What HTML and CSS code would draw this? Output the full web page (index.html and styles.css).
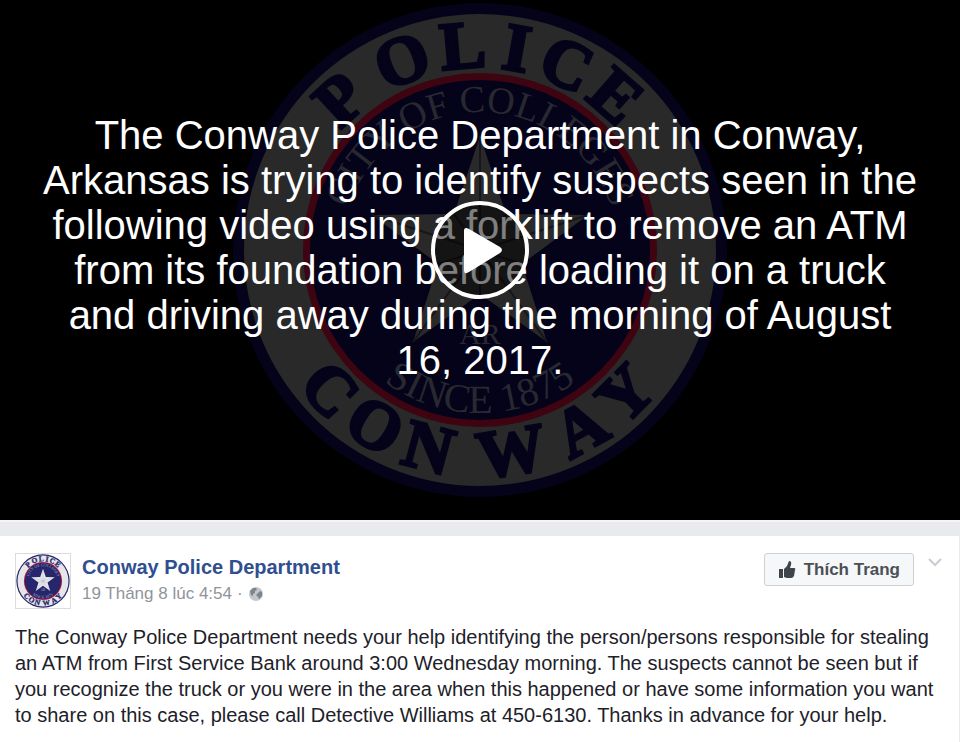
FILE: index.html
```html
<!DOCTYPE html>
<html lang="vi">
<head>
    <meta charset="UTF-8">
    <meta name="viewport" content="width=device-width, initial-scale=1.0">
    <title>Conway Police Department</title>
    <link rel="stylesheet" href="styles.css">
</head>
<body>
    <!-- Video -->
    <div class="video">
        <svg class="seal" viewBox="-250 -250 500 500" aria-hidden="true">
            <defs>
                <path id="arcTop" d="M-138 0A138 138 0 0 1 138 0"/>
                <path id="arcBottom" d="M-163 0A163 163 0 0 0 163 0"/>
                <g id="sealArt">
                    <circle class="navy" r="247"/>
                    <circle class="ring" r="236"/>
                    <circle class="red" r="177"/>
                    <circle class="navy" r="170"/>
                    <text class="letters" x="-140 -94 -38 20 55 104" y="-120 -159 -180 -182 -176 -152" rotate="-43 -22 -5 10 25 41">POLICE</text>
                    <text class="letters" x="-183 -139 -81 1 90 144" y="137 181 213 229 210 177" rotate="47 31 15 -9 -29 -45">CONWAY</text>
                    <text class="motto"><textPath href="#arcTop" startOffset="50%">CITY OF COLLEGES</textPath></text>
                    <text class="since"><textPath href="#arcBottom" startOffset="50%">SINCE 1875</textPath></text>
                    <polygon class="star" points="0,-114 26,-36 108,-35 42,14 67,92 0,44 -67,92 -42,14 -108,-35 -26,-36"/>
                    <path class="facets" d="M0 -114V44M108 -35L-42 14M67 92L-26 -36M-67 92L26 -36M-108 -35L42 14"/>
                    <text class="state" y="94">AR</text>
                </g>
            </defs>
            <use href="#sealArt"/>
        </svg>
        <p class="caption">The Conway Police Department in Conway, Arkansas is trying to identify suspects seen in the following video using a forklift to remove an ATM from its foundation before loading it on a truck and driving away during the morning of August 16, 2017.</p>
        <button class="play" type="button" aria-label="Play">
            <svg viewBox="0 0 98 98">
                <circle cx="49" cy="49" r="47"/>
                <path d="M33 30Q33 25 38 28L69 46Q73 49 69 52L38 71Q33 74 33 69Z"/>
            </svg>
        </button>
    </div>

    <!-- Post -->
    <div class="post">
        <div class="header">
            <a class="avatar" href="#" aria-label="Conway Police Department">
                <svg viewBox="-250 -250 500 500" aria-hidden="true"><use href="#sealArt"/></svg>
            </a>
            <div class="info">
                <a class="name" href="#">Conway Police Department</a>
                <div class="meta">
                    <a href="#">19 Tháng 8 lúc 4:54</a>
                    <span>·</span>
                    <svg class="globe" viewBox="0 0 16 16" aria-hidden="true">
                        <circle cx="8" cy="8" r="7"/>
                        <path d="M2 5L5 2L8 2L9 4L7 5L7 7L5 8L5 10L3 9ZM10 7L12 5L14 6L14 10L11 13L10 11L8 9Z"/>
                    </svg>
                </div>
            </div>
            <button class="like" type="button">
                <svg viewBox="0 0 18 18" aria-hidden="true">
                    <path d="M1 8H5V17H1ZM6 8L9 5L11 0Q14 0 13 4L12 7H16Q18 7 17 9L16 15Q15 17 13 17H9L6 16Z"/>
                </svg>
                Thích Trang
            </button>
            <button class="more" type="button" aria-label="Menu">
                <svg viewBox="0 0 14 10"><path d="M1 1L7 7L13 1"/></svg>
            </button>
        </div>
        <p class="text">The Conway Police Department needs your help identifying the person/persons responsible for stealing an ATM from First Service Bank around 3:00 Wednesday morning. The suspects cannot be seen but if you recognize the truck or you were in the area when this happened or have some information you want to share on this case, please call Detective Williams at 450-6130. Thanks in advance for your help.</p>
    </div>
</body>
</html>
```
FILE: styles.css
```css
body {
    font-family: "Liberation Sans", Arial, sans-serif;
    background-color: #e9eaed;
    margin: 0;
}

button {
    font-family: inherit;
    cursor: pointer;
}

a {
    color: inherit;
    text-decoration: none;
}

    a:hover {
        text-decoration: underline;
    }

/* video with the seal behind the caption */
.video {
    display: grid;
    place-items: center;
    background-color: #000;
    padding-bottom: 20px;
    border-bottom: 2px solid #f4f4f6;
}

    .video > * {
        grid-area: 1 / 1;
    }

.seal {
    width: 500px;
    height: 500px;
    --navy: #04031a;
    --ring: #292929;
    --red: #3e0411;
    --print: #282830;
    --facet: #16161c;
}

.navy {
    fill: var(--navy);
}

.ring {
    fill: var(--ring);
}

.red {
    fill: var(--red);
}

.letters, .motto, .since, .state {
    font-family: "Liberation Serif", "Times New Roman", serif;
}

.letters {
    font-size: 68px;
    font-weight: bold;
    fill: var(--navy);
    stroke: var(--navy);
    stroke-width: 3;
}

.motto, .since, .state {
    font-size: 38px;
    text-anchor: middle;
    fill: var(--print);
}

.since {
    font-size: 40px;
}

.state {
    font-size: 30px;
}

.star {
    fill: var(--ring);
}

.facets {
    fill: none;
    stroke: var(--facet);
    stroke-width: 2;
}

.caption {
    margin: 0;
    padding: 0 40px 4px;
    color: #fff;
    font-size: 40px;
    line-height: 45px;
    text-align: center;
}

.play {
    width: 98px;
    height: 98px;
    padding: 0;
    border: none;
    background: none;
}

    .play svg {
        display: block;
    }

    .play circle {
        fill: rgba(0, 0, 0, 0.5);
        stroke: #fff;
        stroke-width: 4;
    }

    .play path {
        fill: #fff;
    }

/* post */
.post {
    margin: 14px 1px 0 0;
    padding: 17px 15px 14px;
    background-color: #fff;
}

.header {
    display: flex;
    align-items: flex-start;
}

.avatar {
    width: 54px;
    height: 54px;
    border: 1px solid #dcdcdc;
    --navy: #25266b;
    --ring: #e6e6ea;
    --red: #d5213f;
    --print: #a5a6c8;
    --facet: #8f90a8;
}

    .avatar svg {
        display: block;
    }

.info {
    flex: 1;
    margin-left: 11px;
}

.name {
    display: block;
    color: #2f4f90;
    font-size: 20px;
    line-height: 28px;
    font-weight: bold;
}

.meta {
    display: flex;
    align-items: center;
    gap: 5px;
    color: #90949c;
    font-size: 17px;
    line-height: 26px;
}

.globe {
    width: 16px;
    height: 16px;
}

    .globe circle {
        fill: #c4c7cc;
    }

    .globe path {
        fill: #80848c;
    }

.like {
    display: flex;
    align-items: center;
    gap: 8px;
    height: 33px;
    padding: 0 13px;
    border: 1px solid #ced0d4;
    border-radius: 3px;
    background-color: #f6f7f9;
    color: #4b4f56;
    font-size: 17px;
    font-weight: bold;
}

    .like svg {
        width: 18px;
        height: 18px;
        fill: #3f434a;
    }

.more {
    margin: 5px 2px 0 14px;
    padding: 0;
    border: none;
    background: none;
}

    .more svg {
        display: block;
        width: 14px;
        height: 10px;
        fill: none;
        stroke: #c9ccd1;
        stroke-width: 2;
    }

.text {
    margin: 15px 0 0;
    color: #1d2129;
    font-size: 20px;
    line-height: 26px;
}
```
